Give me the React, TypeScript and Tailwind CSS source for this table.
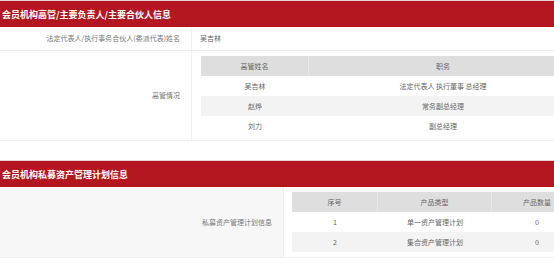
import React from 'react'

const managers = [
  { name: '吴吉林', title: '法定代表人 执行董事 总经理' },
  { name: '赵烨', title: '常务副总经理' },
  { name: '刘力', title: '副总经理' },
]

const plans = [
  { no: '1', type: '单一资产管理计划', count: '0' },
  { no: '2', type: '集合资产管理计划', count: '0' },
]

function SectionTitle({ children }: { children: React.ReactNode }) {
  return (
    <div className="border-t border-[#e9d3d4]">
      <div className="h-[26px] bg-[#b3161f] px-[2px] flex items-center text-[9px] font-bold text-white leading-none">
        {children}
      </div>
    </div>
  )
}

export default function App() {
  return (
    <div
      className="w-[554px] h-[266px] overflow-hidden bg-white text-[7px] text-[#777]"
      style={{ fontFamily: '"Noto Sans CJK SC", "Noto Sans", sans-serif' }}
    >
      <div className="w-[640px]">
        <SectionTitle>会员机构高管/主要负责人/主要合伙人信息</SectionTitle>

        <div className="flex h-[24px] border-b border-[#eeeeee]">
          <div className="w-[192px] shrink-0 flex items-center justify-end pr-[11px] border-r border-[#f0f0f0]">
            法定代表人/执行事务合伙人(委派代表)姓名
          </div>
          <div className="flex items-center pl-[8px] text-[#666]">吴吉林</div>
        </div>

        <div className="flex border-b border-[#eeeeee]">
          <div className="w-[192px] shrink-0 flex items-center justify-end pr-[11px] border-r border-[#f0f0f0]">
            高管情况
          </div>
          <div className="pl-[9px] pt-[5px] pb-[4px]">
            <div className="grid grid-cols-[108px_268px] text-center text-[#666]">
              <div className="h-[20px] flex items-center justify-center bg-[#dedede] border-r border-[#e8e8e8]">高管姓名</div>
              <div className="h-[20px] flex items-center justify-center bg-[#dedede]">职务</div>
              {managers.map((m, i) => (
                <React.Fragment key={m.name}>
                  <div className={`h-[20px] flex items-center justify-center ${i % 2 === 1 ? 'bg-[#f3f3f3]' : ''}`}>{m.name}</div>
                  <div className={`h-[20px] flex items-center justify-center ${i % 2 === 1 ? 'bg-[#f3f3f3]' : ''}`}>{m.title}</div>
                </React.Fragment>
              ))}
            </div>
          </div>
        </div>

        <div className="h-[19px]" />

        <SectionTitle>会员机构私募资产管理计划信息</SectionTitle>

        <div className="flex border-b border-[#eeeeee]">
          <div className="w-[284px] shrink-0 flex items-center justify-end pr-[11px] bg-[#f7f7f7] border-r border-[#efefef]">
            私募资产管理计划信息
          </div>
          <div className="pl-[8px] pt-[5px] pb-[5px]">
            <div className="grid grid-cols-[86px_114px_90px] text-center text-[#666]">
              <div className="h-[20px] flex items-center justify-center bg-[#dedede] border-r border-[#e8e8e8]">序号</div>
              <div className="h-[20px] flex items-center justify-center bg-[#dedede] border-r border-[#e8e8e8]">产品类型</div>
              <div className="h-[20px] flex items-center justify-center bg-[#dedede]">产品数量</div>
              {plans.map((p, i) => (
                <React.Fragment key={p.no}>
                  <div className={`h-[20px] flex items-center justify-center ${i % 2 === 1 ? 'bg-[#f3f3f3]' : ''}`}>{p.no}</div>
                  <div className={`h-[20px] flex items-center justify-center ${i % 2 === 1 ? 'bg-[#f3f3f3]' : ''}`}>{p.type}</div>
                  <div className={`h-[20px] flex items-center justify-center ${i % 2 === 1 ? 'bg-[#f3f3f3]' : ''}`}>{p.count}</div>
                </React.Fragment>
              ))}
            </div>
          </div>
        </div>
      </div>
    </div>
  )
}
